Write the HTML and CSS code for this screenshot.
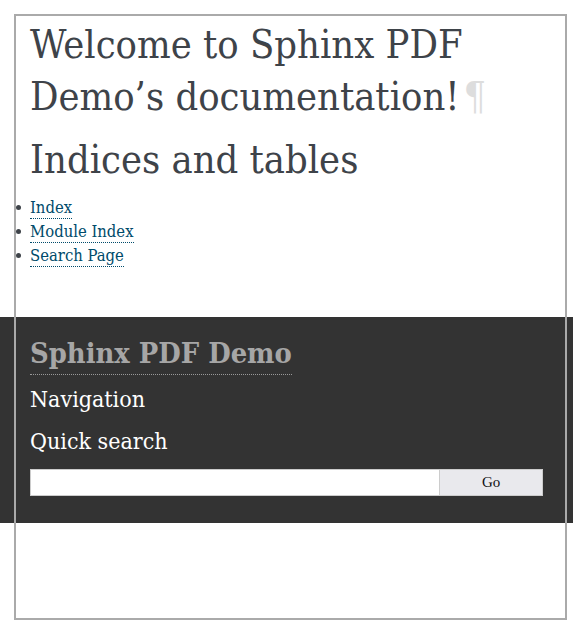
FILE: index.html
```html
<!DOCTYPE html>
<html lang="en">
<head>
<meta charset="utf-8">
<title>Welcome to Sphinx PDF Demo’s documentation!</title>
<link rel="stylesheet" href="styles.css">
</head>
<body>
<div class="page">
  <div class="body">
    <h1 class="title">Welcome to Sphinx PDF Demo’s documentation!<a class="headerlink" href="#">¶</a></h1>
    <h2 class="section">Indices and tables</h2>
    <ul class="links">
      <li><a href="#">Index</a></li>
      <li><a href="#">Module Index</a></li>
      <li><a href="#">Search Page</a></li>
    </ul>
  </div>
  <div class="sidebar">
    <h1 class="logo"><a href="#">Sphinx PDF Demo</a></h1>
    <h3 class="nav-title">Navigation</h3>
    <h3 class="search-title">Quick search</h3>
    <form class="search">
      <input class="search-input" type="text" aria-label="search">
      <input class="search-go" type="submit" value="Go">
    </form>
  </div>
</div>
</body>
</html>
```
FILE: styles.css
```css
html, body {
  margin: 0;
  padding: 0;
  background: #fff;
}

body {
  font-family: "DejaVu Serif Condensed", "DejaVu Serif", serif;
  font-stretch: condensed;
  color: #3e4349;
  padding: 16px 0 16px 16px;
}

.page {
  width: 549px;
  height: 602px;
  outline: 2px solid #aaa;
}

.body {
  padding-left: 14px;
}

.title,
.section {
  font-weight: normal;
  font-size: 39.5px;
  line-height: 52px;
  color: #3e4349;
  margin: 0;
}

.title {
  padding-top: 2px;
}

.section {
  margin-top: 11px;
}

.headerlink {
  color: #ddd;
  text-decoration: none;
  padding: 0 4px;
}

.links {
  margin: 11px 0 49px 0;
  padding: 0;
  list-style: none;
  font-size: 16.5px;
  line-height: 24px;
}

.links li::before {
  content: "";
  display: inline-block;
  width: 5px;
  height: 5px;
  border-radius: 50%;
  background: #3e4349;
  margin: 0 9px 0 -14px;
  vertical-align: 3px;
}

.links a {
  color: #004b6b;
  text-decoration: none;
  border-bottom: 1px dotted #004b6b;
  padding-bottom: 1px;
}

.sidebar {
  margin: 0 -8px 0 -16px;
  padding: 22px 30px 27px 30px;
  background: #333;
  color: #fff;
}

.logo {
  margin: 0;
  font-size: 28.8px;
  font-weight: bold;
  line-height: 28px;
}

.logo a {
  display: block;
  width: fit-content;
  color: #a6a6a6;
  text-decoration: none;
  padding-bottom: 7px;
  border-bottom: 1px dotted #999;
}

.nav-title,
.search-title {
  margin: 0;
  font-weight: normal;
  font-size: 23px;
  line-height: 30px;
  color: #fff;
}

.nav-title {
  margin-top: 9px;
}

.search-title {
  margin-top: 12px;
}

.search {
  display: flex;
  margin: 13px 0 0 0;
  height: 27px;
}

.search-input {
  box-sizing: border-box;
  width: 80%;
  height: 27px;
  margin: 0;
  border: 1px solid #ccc;
  background: #fff;
  padding: 0 4px;
}

.search-go {
  box-sizing: border-box;
  width: 20%;
  height: 27px;
  margin: 0;
  border: 1px solid #ccc;
  border-left: none;
  background: #e9e9ed;
  color: #111;
  font-family: "Liberation Serif", serif;
  font-stretch: normal;
  font-size: 15px;
  padding: 0;
}
```
